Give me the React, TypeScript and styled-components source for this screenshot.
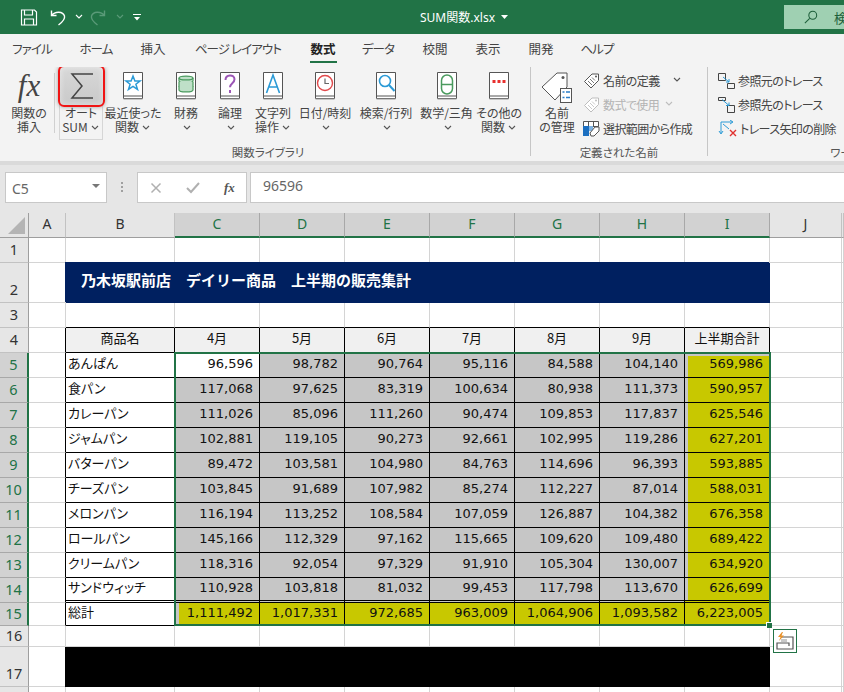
import React from "react";
import styled, { createGlobalStyle } from "styled-components";

const GlobalStyle = createGlobalStyle`
  html, body { margin: 0; padding: 0; background: #fff; }
  * { box-sizing: border-box; }
  body { font-family: "Noto Sans CJK JP", "Noto Sans", sans-serif; font-feature-settings: "palt"; }
`;

const Page = styled.div`
  width: 844px; height: 692px; overflow: hidden; display: flex; flex-direction: column; background: #fff;
`;

/* ---------- title bar ---------- */
const TitleBar = styled.header`
  height: 34px; flex: none; background: #217346; display: flex; align-items: center; color: #fff; position: relative;
`;
const QuickAccess = styled.div`
  display: flex; align-items: center; padding-left: 20px; width: 372px; flex: none;
`;
const QuickIcon = styled.span<{ $w: number }>`
  display: inline-flex; width: ${(p) => p.$w}px; align-items: center; justify-content: flex-start;
`;
const FileName = styled.div`
  width: 184px; flex: none; text-align: center; font-size: 12px; white-space: nowrap; display: flex; justify-content: center; align-items: center; gap: 6px;
  font-family: "Noto Sans", "Noto Sans CJK JP", sans-serif;
`;
const SearchBox = styled.div`
  margin-left: auto; width: 60px; height: 24px; background: #9fd0b2; display: flex; align-items: center; padding-left: 20px; gap: 16px; color: #1d5f3a; font-size: 13px; white-space: nowrap; overflow: hidden; flex: none;
  & > * { flex: none; }
`;

/* ---------- tabs ---------- */
const TabRow = styled.nav`
  height: 33px; flex: none; background: #f3f3f3; display: flex; padding-left: 4px; align-items: flex-start;
`;
const Tab = styled.div<{ $w: number; $on?: boolean; $tight?: boolean }>`
  width: ${(p) => p.$w}px; height: 29px; padding-top: 6px; text-align: center; font-size: 12.5px; line-height: 18px; color: ${(p) => (p.$on ? "#222" : "#444")}; font-weight: ${(p) => (p.$on ? 700 : 400)}; position: relative; white-space: nowrap;
  letter-spacing: ${(p) => (p.$tight ? "-0.9px" : "0")};
  ${(p) => p.$on && `&::after { content: ""; position: absolute; left: 8px; right: 7px; bottom: 0; height: 2px; background: #217346; }`}
`;

/* ---------- ribbon ---------- */
const Ribbon = styled.section`
  height: 94px; flex: none; background: #f3f3f3; display: flex; padding-left: 6px; overflow: hidden;
`;
const Group = styled.div<{ $w: number; $last?: boolean }>`
  width: ${(p) => p.$w}px; flex: none; display: flex; flex-direction: column; position: relative; ${(p) => !p.$last && "border-right: 1px solid #c6c6c6; margin-bottom: 5px;"}
`;
const Tools = styled.div`
  height: 76px; flex: none; display: flex; align-items: flex-start;
`;
const Caption = styled.div`
  height: 18px; line-height: 18px; text-align: center; font-size: 11.5px; color: #555; white-space: nowrap; margin-bottom: -5px;
`;
const Tool = styled.div<{ $w: number; $framed?: boolean }>`
  width: ${(p) => p.$w}px; flex: none; height: 73px; display: flex; flex-direction: column; align-items: center; position: relative; padding-top: 4px; color: #444;
  ${(p) => p.$framed && "border: 1px solid #d6d6d6; border-top-color: transparent; padding-top: 3px;"}
`;
const ToolIcon = styled.div`
  height: 32px; margin-bottom: 3px; display: flex; align-items: flex-start; justify-content: center; flex: none;
`;
const ToolLabel = styled.div`
  font-size: 12px; line-height: 14px; text-align: center; white-space: nowrap; color: #444;
`;
const Chevron = styled.svg`
  display: inline-block; width: 8px; height: 5px; margin: 0 1px 2px 3px; vertical-align: middle; flex: none;
`;
const Divider = styled.div`
  width: 1px; height: 60px; background: #d0d0d0; margin: 6px 4px 0 2px; flex: none;
`;
const FxMark = styled.span`
  font-family: "Liberation Serif", serif; font-style: italic; font-size: 31px; line-height: 30px; color: #444;
`;
const Highlight = styled.div`
  position: absolute; left: -2px; top: -3px; width: 47px; height: 42px; border: 2px solid #f01414; border-radius: 6px;
  background: linear-gradient(#d8d8d8, #c9c9c9); box-shadow: 0 0 4px rgba(60,60,60,.45), inset 0 0 6px rgba(255,255,255,.5); display: flex; align-items: center; justify-content: center; z-index: 2;
`;
const SmallList = styled.div<{ $w: number; $pad: number }>`
  width: ${(p) => p.$w}px; padding-left: ${(p) => p.$pad}px; flex: none; padding-top: 1px; white-space: nowrap;
`;
const SmallRow = styled.div<{ $dim?: boolean }>`
  height: 24px; display: flex; align-items: center; gap: 3px; font-size: 12px; letter-spacing: -0.6px; color: ${(p) => (p.$dim ? "#b4b4b4" : "#444")};
`;
const SmallSpacer = styled.span<{ $w: number }>`
  display: inline-block; width: ${(p) => p.$w}px; flex: none;
`;
const RibbonEdge = styled.div`
  height: 4px; flex: none; background: #dadada;
`;

/* ---------- formula bar ---------- */
const FormulaBar = styled.div`
  height: 48px; flex: none; background: #e6e6e6; display: flex; padding: 7px 0 0 5px; align-items: flex-start;
`;
const NameBox = styled.div`
  width: 102px; height: 31px; background: #fff; border: 1px solid #c8c8c8; display: flex; align-items: center; justify-content: space-between; padding: 2px 6px 0 6px; font: 14px "Noto Sans", sans-serif; color: #666;
`;
const Caret = styled.span`
  width: 0; height: 0; border-left: 4px solid transparent; border-right: 4px solid transparent; border-top: 4px solid #777; margin-top: -6px;
`;
const Grip = styled.div`
  width: 30px; height: 30px; flex: none; display: flex; flex-direction: column; align-items: center; justify-content: center; gap: 2px;
  & > i { width: 2px; height: 2px; background: #a0a0a0; display: block; }
`;
const FxBox = styled.div`
  width: 110px; height: 31px; background: #fff; border: 1px solid #c8c8c8; display: flex; align-items: center; padding-left: 12px; gap: 24px; flex: none; color: #555;
`;
const FxSmall = styled.span`
  font: italic 700 13px "Liberation Serif", serif; color: #555;
`;
const FormulaInput = styled.div`
  margin-left: 3px; flex: 1; height: 31px; background: #fff; border: 1px solid #c8c8c8; border-right: 0; padding: 0 0 4px 12px; display: flex; align-items: center; font: 14px "Noto Sans", sans-serif; color: #666;
`;

/* ---------- sheet ---------- */
const Sheet = styled.div`
  flex: none; display: grid; position: relative;
  grid-template-columns: 29px 37px 109px repeat(7, 85px) 72px 2px;
  grid-template-rows: 25px 25px 40px 25px 25px repeat(10, 25px) 23px 21px 40px 25px;
`;
const Corner = styled.div`
  background: #e6e6e6; border-right: 1px solid #9e9e9e; border-bottom: 1px solid #9e9e9e; display: flex; align-items: flex-end; justify-content: flex-end; padding: 0 3px 3px 0;
`;
const Triangle = styled.div`
  width: 17px; height: 17px; background: #b4b4b4; clip-path: polygon(100% 0, 100% 100%, 0 100%);
`;
const ColHead = styled.div<{ $on?: boolean }>`
  display: flex; align-items: center; justify-content: center; padding-bottom: 3px;
  font: 14px "Noto Sans", sans-serif;
  background: ${(p) => (p.$on ? "#d2d2d2" : "#e6e6e6")}; color: ${(p) => (p.$on ? "#217346" : "#333")};
  border-right: 1px solid ${(p) => (p.$on ? "#a8a8a8" : "#c2c2c2")};
  border-bottom: ${(p) => (p.$on ? "2px solid #217346" : "1px solid #9e9e9e")};
`;
const RowHead = styled.div<{ $on?: boolean; $tall?: boolean }>`
  display: flex; justify-content: center; align-items: ${(p) => (p.$tall ? "flex-end" : "center")}; padding-bottom: ${(p) => (p.$tall ? "3px" : "3px")};
  font: 14.5px "Noto Sans", sans-serif;
  background: ${(p) => (p.$on ? "#d2d2d2" : "#e6e6e6")}; color: ${(p) => (p.$on ? "#217346" : "#333")};
  border-right: ${(p) => (p.$on ? "2px solid #217346" : "1px solid #9e9e9e")};
  border-bottom: 1px solid ${(p) => (p.$on ? "#a8a8a8" : "#c2c2c2")};
`;
const Cell = styled.div<{ $edge?: boolean; $under?: boolean }>`
  background: #fff;
  border-right: 1px solid ${(p) => (p.$edge ? "#000" : "#d4d4d4")};
  border-bottom: 1px solid ${(p) => (p.$under ? "#000" : "#d4d4d4")};
`;
const Banner = styled.div<{ $black?: boolean }>`
  grid-column: span 8;
  background: ${(p) => (p.$black ? "#000" : "#002060")};
  box-shadow: ${(p) => (p.$black ? "-1px 0 0 #000" : "-1px -1px 0 #002060")};
  color: #fff; font-weight: 700; font-size: 15px; padding-left: 15px; padding-bottom: 8px; display: flex; align-items: center; white-space: pre;
  font-feature-settings: normal;
`;
const TableCell = styled.div<{ $fill?: string; $bottom?: "double" | "none"; $inset?: string }>`
  display: flex; align-items: center; padding: 0 3px 2px 3px; white-space: nowrap; overflow: hidden;
  background: ${(p) => p.$fill ?? "#fff"};
  color: #111; font-size: 13px;
  border-right: 1px solid #000;
  border-bottom: ${(p) => (p.$bottom === "double" ? "3px double #000" : "1px solid #000")};
  ${(p) => p.$inset && `box-shadow: ${p.$inset};`}
`;
const HeadCell = styled(TableCell)`
  justify-content: center; background: #f0f0f0; padding-bottom: 5px;
  font-feature-settings: normal;
`;
const LabelCell = styled(TableCell)`
  font-feature-settings: "palt"; padding-bottom: 6px; padding-left: 2px;
`;
const NumCell = styled(TableCell)`
  justify-content: flex-end; padding-right: 6px; font: 13px "DejaVu Sans", sans-serif; padding-bottom: 3px;
`;
const Selection = styled.div`
  position: absolute; grid-column: 4 / 11; grid-row: 6 / 17; inset: -1px -1px 0 -1px; border: 2px solid #217346; z-index: 3; pointer-events: none;
`;
const FillHandle = styled.div`
  position: absolute; right: -3px; bottom: -4px; width: 6px; height: 6px; background: #217346; border-left: 1px solid #fff; border-top: 1px solid #fff;
`;
const QuickAnalysis = styled.div`
  position: absolute; left: calc(100% + 4px); top: calc(100% + 5px); width: 24px; height: 24px; background: #fff; border: 1px solid #217346; display: flex; align-items: center; justify-content: center;
`;

/* ---------- drawings ---------- */
const Chev = ({ c = "#555" }: { c?: string }) => (
  <Chevron viewBox="0 0 8 5"><path d="M1 1l3 3 3-3" fill="none" stroke={c} strokeWidth="1.1" /></Chevron>
);
const Book = ({ children }: { children?: React.ReactNode }) => (
  <svg width="22" height="30" viewBox="0 0 22 30">
    <path d="M1.5 1.5h19v26h-19z" fill="#fff" stroke="#555" />
    <path d="M1.5 25h19" stroke="#555" />
    <path d="M1.5 27.5h19v1h-19z" fill="#999" />
    {children}
  </svg>
);
const Star = () => <path d="M11 5l1.9 5h5.1l-4.1 3.2 1.6 5.2-4.5-3.1-4.5 3.1 1.6-5.2-4.1-3.2h5.1z" fill="none" stroke="#2b9ad6" strokeWidth="1.5" />;
const Coins = () => (
  <g fill="#bfe0c8" stroke="#4a9a5e" strokeWidth="1.2">
    <path d="M4 7c0-2.6 14-2.6 14 0v3c0 2.6-14 2.6-14 0z" />
    <path d="M4 7c0 2.6 14 2.6 14 0" fill="none" />
    <path d="M4 11v4c0 2.6 14 2.6 14 0v-4" />
    <path d="M4 15v4c0 2.6 14 2.6 14 0v-4" />
  </g>
);
const Question = () => <path d="M6.5 9c0-6 9-6 9-.7 0 4-4.500 3.700-4.500 8M11 19v3" fill="none" stroke="#9b55b5" strokeWidth="2" />;
const LetterA = () => <path d="M4.500 22L11 4l6.500 18M7 16h8" fill="none" stroke="#2b9ad6" strokeWidth="1.6" />;
const Clock = () => (
  <g fill="none" stroke="#e0484a" strokeWidth="1.4"><circle cx="11" cy="12" r="7.500" /><path d="M11 7.500V12.500H15" stroke="#666" strokeWidth="1.2" /></g>
);
const Lens = () => (
  <g fill="none" stroke="#2b9ad6" strokeWidth="1.6"><circle cx="10" cy="10" r="5.500" /><path d="M14 14l5.500 6" strokeWidth="2" /></g>
);
const Theta = () => (
  <g fill="none" stroke="#4a9a5e" strokeWidth="1.5"><rect x="5.500" y="4" width="11" height="19" rx="5.500" /><path d="M5.500 13.500h11" /></g>
);
const Dots = () => <g fill="#e8302e"><rect x="4.500" y="9" width="3" height="3" /><rect x="9.500" y="9" width="3" height="3" /><rect x="14.500" y="9" width="3" height="3" /></g>;

const SmallTag = ({ c = "#555" }: { c?: string }) => (
  <svg width="17" height="17" viewBox="0 0 17 17">
    <path d="M1.500 9.500L9 2h6.500v6.500L8 16z" fill="#fff" stroke={c} />
    <path d="M5 9l4 4M7 7l4 4M9 5.500l3 3" stroke={c} strokeWidth=".8" />
    <circle cx="13" cy="4.500" r="1" fill={c} />
  </svg>
);
const TableTag = () => (
  <svg width="17" height="17" viewBox="0 0 17 17">
    <path d="M.5 1.500h15v5h-15z" fill="#fff" stroke="#555" />
    <path d="M5.500 1.500v5M10.500 1.500v5" stroke="#555" />
    <path d="M0 6h6v10H0z" fill="#1c6fc0" />
    <path d="M6 6h4v5H6z" fill="#7fb2e0" />
    <path d="M7 13l5-6h4v4l-5 5h-3z" fill="#fff" stroke="#555" />
  </svg>
);
const TraceFrom = () => (
  <svg width="17" height="17" viewBox="0 0 17 17">
    <path d="M.5 1.500h7v7h-7zM9.500 11.500h7v5h-7z" fill="none" stroke="#444" />
    <path d="M5 5l6 5M8 10h3V7" fill="none" stroke="#2b9ad6" />
  </svg>
);
const TraceTo = () => (
  <svg width="17" height="17" viewBox="0 0 17 17">
    <path d="M.5 1.500h7v3h-7zM9.500 9.500h7v7h-7z" fill="none" stroke="#444" />
    <path d="M4 3.500l7 6M8 9.500h3V6.500" fill="none" stroke="#2b9ad6" />
  </svg>
);
const TraceClear = () => (
  <svg width="19" height="17" viewBox="0 0 19 17">
    <path d="M3 2v11M1 11l2 3 2-3M3 2h11M12 0l3 2-3 2" fill="none" stroke="#2b9ad6" />
    <path d="M5 4l6 5" stroke="#2b9ad6" />
    <path d="M12 10l6 6M18 10l-6 6" stroke="#e0302e" strokeWidth="1.4" />
  </svg>
);

/* ---------- data ---------- */
const TABS: { t: string; w: number; on?: boolean; tight?: boolean }[] = [
  { t: "ファイル", w: 56, tight: true }, { t: "ホーム", w: 72, tight: true }, { t: "挿入", w: 42 },
  { t: "ページ レイアウト", w: 128, tight: true }, { t: "数式", w: 42, on: true },
  { t: "データ", w: 68, tight: true }, { t: "校閲", w: 46 }, { t: "表示", w: 60 }, { t: "開発", w: 46 }, { t: "ヘルプ", w: 66, tight: true },
];
const COLS = ["C", "D", "E", "F", "G", "H", "I"];
const ROWS: [string, ...string[]][] = [
  ["あんぱん", "96,596", "98,782", "90,764", "95,116", "84,588", "104,140", "569,986"],
  ["食パン", "117,068", "97,625", "83,319", "100,634", "80,938", "111,373", "590,957"],
  ["カレーパン", "111,026", "85,096", "111,260", "90,474", "109,853", "117,837", "625,546"],
  ["ジャムパン", "102,881", "119,105", "90,273", "92,661", "102,995", "119,286", "627,201"],
  ["バターパン", "89,472", "103,581", "104,980", "84,763", "114,696", "96,393", "593,885"],
  ["チーズパン", "103,845", "91,689", "107,982", "85,274", "112,227", "87,014", "588,031"],
  ["メロンパン", "116,194", "113,252", "108,584", "107,059", "126,887", "104,382", "676,358"],
  ["ロールパン", "145,166", "112,329", "97,162", "115,665", "109,620", "109,480", "689,422"],
  ["クリームパン", "118,316", "92,054", "97,329", "91,910", "105,304", "130,007", "634,920"],
  ["サンドウィッチ", "110,928", "103,818", "81,032", "99,453", "117,798", "113,670", "626,699"],
];
const TOTALS = ["1,111,492", "1,017,331", "972,685", "963,009", "1,064,906", "1,093,582", "6,223,005"];
const MONTHS = ["4月", "5月", "6月", "7月", "8月", "9月", "上半期合計"];
const GREY = "#c6c6c6";
const YELLOW = "#c8c800";

export default function App() {
  return (
    <Page>
      <GlobalStyle />
      <TitleBar>
        <QuickAccess>
          <QuickIcon $w={30}>
            <svg width="18" height="17" viewBox="0 0 18 17" fill="none" stroke="#fff" strokeWidth="1.2">
              <path d="M1.500 1h13l2 2v13h-15z" /><path d="M4.500 1v5h8V1M4.500 16v-6h9v6" />
            </svg>
          </QuickIcon>
          <QuickIcon $w={22}>
            <svg width="17" height="17" viewBox="0 0 17 17" fill="none" stroke="#fff" strokeWidth="1.4">
              <path d="M1.500 1.500v5h5" /><path d="M1.500 6.500C5 2 13 2 14.500 7c.8 3.500-2 6-6 9" />
            </svg>
          </QuickIcon>
          <QuickIcon $w={17}><Chev c="#fff" /></QuickIcon>
          <QuickIcon $w={24}>
            <svg width="17" height="17" viewBox="0 0 17 17" fill="none" stroke="#5a9a78" strokeWidth="1.4">
              <path d="M15.500 1.500v5h-5" /><path d="M15.500 6.500C12 2 4 2 2.500 7c-.8 3.500 2 6 6 9" />
            </svg>
          </QuickIcon>
          <QuickIcon $w={20}><Chev c="#5a9a78" /></QuickIcon>
          <QuickIcon $w={14}>
            <svg width="8" height="8" viewBox="0 0 8 8" fill="#fff"><path d="M0 1h8v1H0zM1 4h6L4 7.500z" /></svg>
          </QuickIcon>
        </QuickAccess>
        <FileName>
          SUM関数.xlsx
          <svg width="7" height="4" viewBox="0 0 7 4" fill="#fff"><path d="M0 0h7L3.500 4z" /></svg>
        </FileName>
        <SearchBox>
          <svg width="14" height="14" viewBox="0 0 16 16" fill="none" stroke="#1d5f3a" strokeWidth="1.2">
            <circle cx="10" cy="6" r="4.500" /><path d="M6.500 9.500L1 15" />
          </svg>
          <span>検索</span>
        </SearchBox>
      </TitleBar>

      <TabRow>
        {TABS.map(({ t, w, on, tight }) => (
          <Tab key={t} $w={w} $on={on} $tight={tight}>{t}</Tab>
        ))}
      </TabRow>

      <Ribbon>
        <Group $w={525}>
          <Tools>
            <Tool $w={46}>
              <ToolIcon><FxMark>fx</FxMark></ToolIcon>
              <ToolLabel>関数の<br />挿入</ToolLabel>
            </Tool>
            <Divider />
            <Tool $w={44} $framed>
              <Highlight>
                <svg width="24" height="28" viewBox="0 0 24 28" fill="none" stroke="#444" strokeWidth="1.5">
                  <path d="M23 2H2l10 12L2 26h21" />
                </svg>
              </Highlight>
              <ToolIcon />
              <ToolLabel>オート<br />SUM<Chev /></ToolLabel>
            </Tool>
            <Tool $w={60}>
              <ToolIcon><Book><Star /></Book></ToolIcon>
              <ToolLabel>最近使った<br />関数<Chev /></ToolLabel>
            </Tool>
            <Tool $w={46}>
              <ToolIcon><Book><Coins /></Book></ToolIcon>
              <ToolLabel>財務<br /><Chev /></ToolLabel>
            </Tool>
            <Tool $w={42}>
              <ToolIcon><Book><Question /></Book></ToolIcon>
              <ToolLabel>論理<br /><Chev /></ToolLabel>
            </Tool>
            <Tool $w={44}>
              <ToolIcon><Book><LetterA /></Book></ToolIcon>
              <ToolLabel>文字列<br />操作<Chev /></ToolLabel>
            </Tool>
            <Tool $w={60}>
              <ToolIcon><Book><Clock /></Book></ToolIcon>
              <ToolLabel>日付/時刻<br /><Chev /></ToolLabel>
            </Tool>
            <Tool $w={62}>
              <ToolIcon><Book><Lens /></Book></ToolIcon>
              <ToolLabel>検索/行列<br /><Chev /></ToolLabel>
            </Tool>
            <Tool $w={59}>
              <ToolIcon><Book><Theta /></Book></ToolIcon>
              <ToolLabel>数学/三角<br /><Chev /></ToolLabel>
            </Tool>
            <Tool $w={46}>
              <ToolIcon><Book><Dots /></Book></ToolIcon>
              <ToolLabel>その他の<br />関数<Chev /></ToolLabel>
            </Tool>
          </Tools>
          <Caption>関数ライブラリ</Caption>
        </Group>

        <Group $w={177}>
          <Tools>
            <Tool $w={52}>
              <ToolIcon>
                <svg width="32" height="32" viewBox="0 0 32 32" fill="none">
                  <path d="M1 16L16 2h10v14L14 29z" fill="#fff" stroke="#555" />
                  <circle cx="22" cy="6.500" r="1.500" fill="#555" />
                  <rect x="19.500" y="17.500" width="11" height="14" fill="#fff" stroke="#555" />
                  <path d="M21.500 21h2M25 21h4M21.500 26.500h2M25 26.500h4" stroke="#2b7fc9" strokeWidth="1.400" />
                </svg>
              </ToolIcon>
              <ToolLabel>名前<br />の管理</ToolLabel>
            </Tool>
            <SmallList $w={125} $pad={0}>
              <SmallRow><SmallTag /><span>名前の定義</span><SmallSpacer $w={4} /><Chev /></SmallRow>
              <SmallRow $dim><SmallTag c="#bdbdbd" /><span>数式で使用</span><Chev c="#bdbdbd" /></SmallRow>
              <SmallRow><TableTag /><span>選択範囲から作成</span></SmallRow>
            </SmallList>
          </Tools>
          <Caption>定義された名前</Caption>
        </Group>

        <Group $w={330} $last>
          <Tools>
            <SmallList $w={240} $pad={10}>
              <SmallRow><TraceFrom /><span>参照元のトレース</span></SmallRow>
              <SmallRow><TraceTo /><span>参照先のトレース</span></SmallRow>
              <SmallRow><TraceClear /><span>トレース矢印の削除</span><SmallSpacer $w={2} /><Chev /></SmallRow>
            </SmallList>
          </Tools>
          <Caption>ワークシート分析</Caption>
        </Group>
      </Ribbon>
      <RibbonEdge />

      <FormulaBar>
        <NameBox>C5<Caret /></NameBox>
        <Grip><i /><i /><i /></Grip>
        <FxBox>
          <svg width="12" height="12" viewBox="0 0 12 12" stroke="#b0b0b0" strokeWidth="1.5"><path d="M1.500 1.500l9 9M10.500 1.500l-9 9" /></svg>
          <svg width="14" height="12" viewBox="0 0 14 12" fill="none" stroke="#b0b0b0" strokeWidth="2"><path d="M1 6l4 4 8-9" /></svg>
          <FxSmall>fx</FxSmall>
        </FxBox>
        <FormulaInput>96596</FormulaInput>
      </FormulaBar>

      <Sheet>
        <Corner><Triangle /></Corner>
        <ColHead>A</ColHead>
        <ColHead>B</ColHead>
        {COLS.map((c) => <ColHead key={c} $on>{c}</ColHead>)}
        <ColHead>J</ColHead>
        <ColHead />

        {/* row 1 */}
        <RowHead>1</RowHead>
        {Array.from({ length: 11 }).map((_, i) => <Cell key={i} />)}

        {/* row 2 */}
        <RowHead $tall>2</RowHead>
        <Cell />
        <Banner>{"乃木坂駅前店　デイリー商品　上半期の販売集計"}</Banner>
        <Cell />
        <Cell />

        {/* row 3 */}
        <RowHead>3</RowHead>
        <Cell />
        {Array.from({ length: 8 }).map((_, i) => <Cell key={i} $under />)}
        <Cell />
        <Cell />

        {/* row 4 */}
        <RowHead>4</RowHead>
        <Cell $edge />
        <HeadCell>商品名</HeadCell>
        {MONTHS.map((m) => <HeadCell key={m}>{m}</HeadCell>)}
        <Cell />
        <Cell />

        {/* rows 5-14 */}
        {ROWS.map(([name, ...vals], r) => (
          <React.Fragment key={name}>
            <RowHead $on>{r + 5}</RowHead>
            <Cell $edge />
            <LabelCell $bottom={r === 9 ? "double" : undefined}>{name}</LabelCell>
            {vals.map((v, c) => {
              const isSum = c === 6;
              const active = r === 0 && c === 0;
              return (
                <NumCell
                  key={c}
                  $bottom={r === 9 ? "double" : undefined}
                  $fill={active ? "#fff" : isSum ? YELLOW : GREY}
                  $inset={isSum ? (r === 0 ? `inset 3px 3px 0 ${GREY}` : `inset 3px 0 0 ${GREY}`) : undefined}
                >
                  {v}
                </NumCell>
              );
            })}
            <Cell />
            <Cell />
          </React.Fragment>
        ))}

        {/* row 15 */}
        <RowHead $on>15</RowHead>
        <Cell $edge />
        <LabelCell>総計</LabelCell>
        {TOTALS.map((v, c) => (
          <NumCell key={v} $fill={YELLOW} $inset={c === 0 ? `inset 4px 0 0 ${GREY}` : undefined}>{v}</NumCell>
        ))}
        <Cell />
        <Cell />

        {/* row 16 */}
        <RowHead>16</RowHead>
        {Array.from({ length: 11 }).map((_, i) => <Cell key={i} />)}

        {/* row 17 */}
        <RowHead $tall>17</RowHead>
        <Cell />
        <Banner $black />
        <Cell />
        <Cell />

        {/* row 18 */}
        <RowHead>18</RowHead>
        {Array.from({ length: 11 }).map((_, i) => <Cell key={i} />)}

        <Selection>
          <FillHandle />
          <QuickAnalysis>
            <svg width="20" height="20" viewBox="0 0 20 20" fill="none">
              <path d="M6 6h12v12H2v-6h12v3" stroke="#555" strokeWidth="1.2" />
              <path d="M6 11h6V8H6z" fill="#c9c9c9" />
              <path d="M7 1L3 6h2.500L4 10l5-5.500H6.500L8 1z" fill="#e8912a" />
            </svg>
          </QuickAnalysis>
        </Selection>
      </Sheet>
    </Page>
  );
}
